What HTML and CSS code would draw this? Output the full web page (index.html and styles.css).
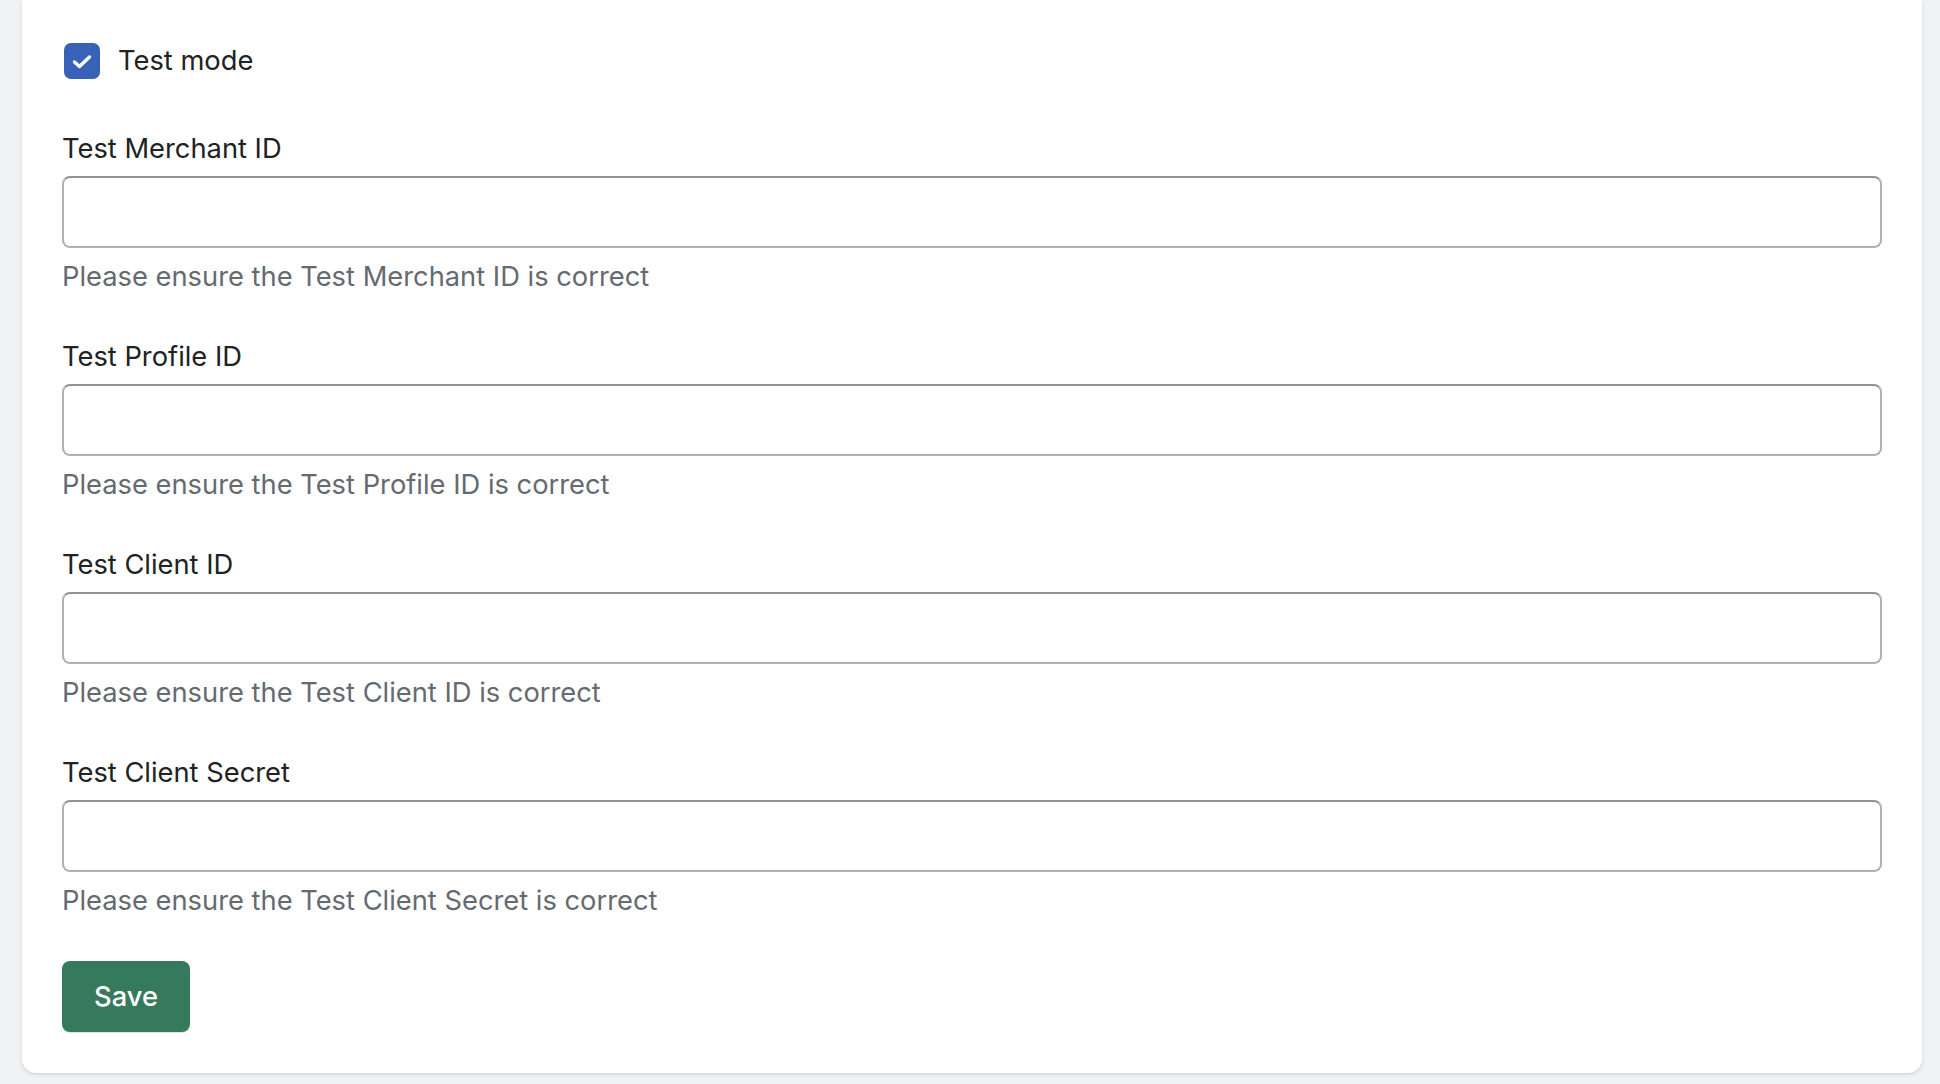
FILE: index.html
```html
<!DOCTYPE html>
<html lang="en">
<head>
<meta charset="utf-8">
<title>Test mode settings</title>
<link rel="stylesheet" href="styles.css">
</head>
<body>
<div class="page">
  <form class="card">
    <label class="check-row">
      <span class="checkbox">
        <svg width="36" height="36" viewBox="0 0 36 36"><path d="M10.5 19 L15.5 23.5 L25.5 14" fill="none" stroke="#fff" stroke-width="3.4" stroke-linecap="round" stroke-linejoin="round"/></svg>
      </span>
      <span class="check-label">Test mode</span>
    </label>

    <div class="field first">
      <label class="field-label">Test Merchant ID</label>
      <input class="text-input" type="text">
      <div class="help">Please ensure the Test Merchant ID is correct</div>
    </div>

    <div class="field">
      <label class="field-label">Test Profile ID</label>
      <input class="text-input" type="text">
      <div class="help">Please ensure the Test Profile ID is correct</div>
    </div>

    <div class="field">
      <label class="field-label">Test Client ID</label>
      <input class="text-input" type="text">
      <div class="help">Please ensure the Test Client ID is correct</div>
    </div>

    <div class="field">
      <label class="field-label">Test Client Secret</label>
      <input class="text-input" type="text">
      <div class="help">Please ensure the Test Client Secret is correct</div>
    </div>

    <div class="actions">
      <button type="button" class="btn-primary">Save</button>
    </div>
  </form>
</div>
</body>
</html>
```

FILE: styles.css
```css
* { box-sizing: border-box; }

html, body {
  margin: 0;
  padding: 0;
  background: #f1f2f4;
}

body {
  font-family: Inter, "Noto Sans", "Liberation Sans", sans-serif;
  font-size: 27.3px;
  line-height: 36px;
  color: #202223;
}

.page {
  padding: 0 18px 13px 22px;
}

.card {
  background: #ffffff;
  border-radius: 0 0 14px 14px;
  box-shadow: 0 2px 4px rgba(31, 33, 36, 0.10), 0 1px 2px rgba(31, 33, 36, 0.06);
  padding: 43px 40px 41px 40px;
  display: flex;
  flex-direction: column;
}

.check-row {
  display: flex;
  align-items: center;
  gap: 18px;
  padding-left: 2px;
}

.checkbox {
  width: 36px;
  height: 36px;
  border-radius: 7px;
  background: #3762b8;
  display: flex;
}

.check-label {
  color: #202223;
}

.field {
  display: flex;
  flex-direction: column;
  margin-top: 44px;
}

.field.first {
  margin-top: 52px;
}

.field-label {
  display: block;
  margin-bottom: 9px;
}

.text-input {
  display: block;
  width: 100%;
  height: 72px;
  border: 2px solid #aeb2b8;
  border-top-color: #8e9196;
  border-radius: 8px;
  background: #fff;
  font: inherit;
  padding: 0 20px;
  outline: none;
}

.help {
  margin-top: 11px;
  color: #656a71;
}

.actions {
  margin-top: 42px;
  display: flex;
}

.btn-primary {
  height: 71px;
  padding: 0 32px;
  border: none;
  border-radius: 8px;
  background: #367a5e;
  color: #ffffff;
  font-family: inherit;
  font-size: 27.3px;
  font-weight: 500;
  box-shadow: 0 1px 1px rgba(0, 0, 0, 0.12);
  cursor: pointer;
}
```
